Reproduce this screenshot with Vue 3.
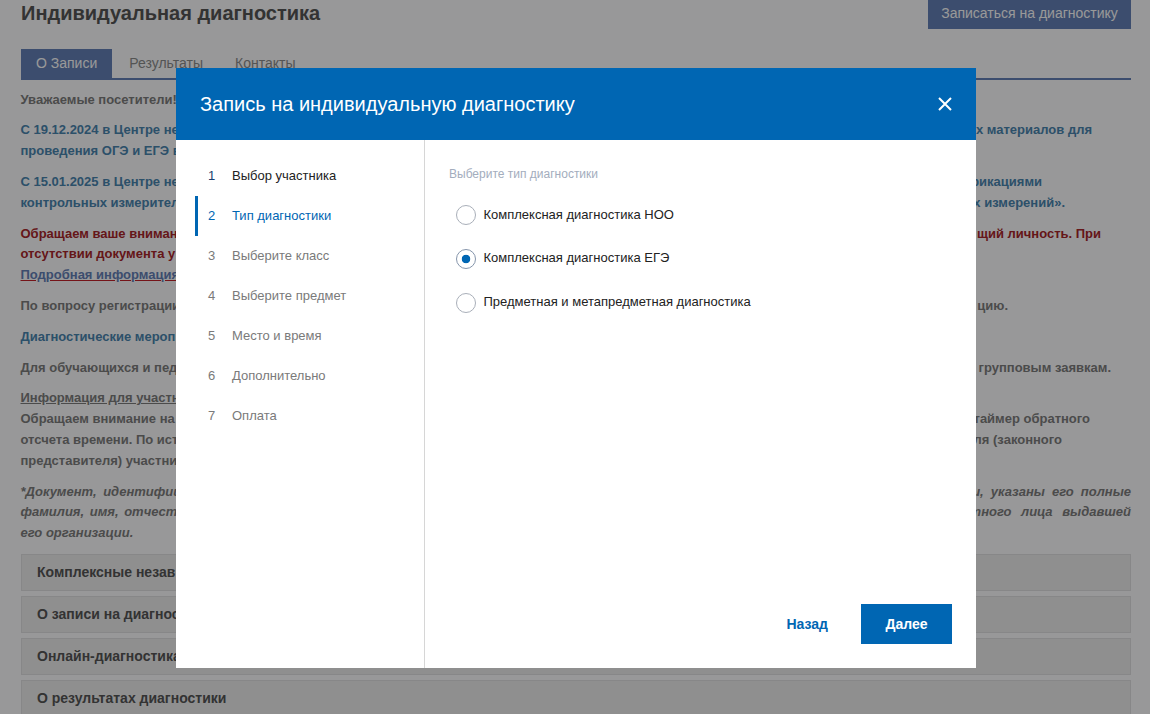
<template>
  <div class="page">
    <div class="head">
      <h1>Индивидуальная диагностика</h1>
      <a class="signup">Записаться на диагностику</a>
    </div>
    <div class="tabs">
      <a v-for="(t, i) in tabs" :key="t" class="tab" :class="{ active: i === 0 }">{{ t }}</a>
    </div>
    <div class="text">
      <p v-for="(para, i) in paragraphs" :key="i" :class="para.kind">
        <span v-for="(line, j) in para.lines" :key="j" class="line" :style="{ paddingRight: (line.inset || 0) + 'px' }">
          <span :class="{ ul: line.ul }" :style="{ wordSpacing: (line.ws || 0) + 'px' }">{{ line.left }}</span>
          <span v-if="line.right" :style="{ wordSpacing: (line.rws || 0) + 'px' }">{{ line.right }}</span>
        </span>
      </p>
    </div>
    <div class="accordion">
      <div v-for="a in accordion" :key="a" class="acc-item">{{ a }}</div>
    </div>
  </div>

  <div class="overlay">
    <div class="modal">
      <div class="modal-head">
        <h2>Запись на индивидуальную диагностику</h2>
        <button class="close" aria-label="Закрыть">
          <svg width="14" height="14" viewBox="0 0 14 14">
            <path d="M1 1L13 13M13 1L1 13" stroke="#fff" stroke-width="2" fill="none" />
          </svg>
        </button>
      </div>
      <div class="modal-body">
        <ul class="steps">
          <li v-for="(s, i) in steps" :key="s" class="step" :class="{ done: i === 0, current: i === 1 }">
            <span class="num">{{ i + 1 }}</span>
            <span>{{ s }}</span>
          </li>
        </ul>
        <div class="pane">
          <div class="pane-title">Выберите тип диагностики</div>
          <label v-for="(o, i) in options" :key="o" class="option">
            <input type="radio" name="kind" :value="i" v-model="picked" />
            <span>{{ o }}</span>
          </label>
          <div class="actions">
            <button class="back">Назад</button>
            <button class="next">Далее</button>
          </div>
        </div>
      </div>
    </div>
  </div>
</template>

<script setup>
import { ref } from 'vue'

const tabs = ['О Записи', 'Результаты', 'Контакты']
const picked = ref(1)

// the middle of each line sits behind the modal, only the visible ends are kept
const paragraphs = [
  { kind: 'plain', lines: [{ left: 'Уважаемые посетители!' }] },
  {
    kind: 'blue',
    lines: [
      { left: 'С 19.12.2024 в Центре нез', right: 'х материалов для', inset: 39 },
      { left: 'проведения ОГЭ и ЕГЭ в' },
    ],
  },
  {
    kind: 'blue',
    lines: [
      { left: 'С 15.01.2025 в Центре нез', right: 'фикациями', inset: 89 },
      { left: 'контрольных измерител', right: 'х измерений».', inset: 66 },
    ],
  },
  {
    kind: 'red',
    lines: [
      { left: 'Обращаем ваше вниман', right: 'щий личность. При', inset: 30 },
      { left: 'отсутствии документа у' },
      { left: 'Подробная информация', ul: true },
    ],
  },
  { kind: 'plain', lines: [{ left: 'По вопросу регистрации', right: 'цию.', inset: 123 }] },
  { kind: 'blue', lines: [{ left: 'Диагностические мероп' }] },
  { kind: 'plain', lines: [{ left: 'Для обучающихся и пед', right: 'групповым заявкам.', inset: 20 }] },
  {
    kind: 'plain',
    lines: [
      { left: 'Информация для участн', ul: true },
      { left: 'Обращаем внимание на', right: 'таймер обратного', inset: 41 },
      { left: 'отсчета времени. По ист', right: 'ля (законного', inset: 69 },
      { left: 'представителя) участни' },
    ],
  },
  {
    kind: 'note',
    lines: [
      { left: '*Документ, идентифиц', right: 'и, указаны его полные', ws: 3, rws: 3.5 },
      { left: 'фамилия, имя, отчест', right: 'стного лица выдавшей', ws: 2, rws: 6 },
      { left: 'его организации.' },
    ],
  },
]

const accordion = [
  'Комплексные незав',
  'О записи на диагнос',
  'Онлайн-диагностика',
  'О результатах диагностики',
]

const steps = [
  'Выбор участника',
  'Тип диагностики',
  'Выберите класс',
  'Выберите предмет',
  'Место и время',
  'Дополнительно',
  'Оплата',
]

const options = [
  'Комплексная диагностика НОО',
  'Комплексная диагностика ЕГЭ',
  'Предметная и метапредметная диагностика',
]
</script>

<style>
html,
body {
  margin: 0;
  height: 714px;
  overflow: hidden;
  background: #fdfeff;
}
</style>

<style scoped>
.page {
  height: 714px;
  overflow: hidden;
  box-sizing: border-box;
  padding: 0 19px 0 21px;
  font-family: "Liberation Sans", Arial, sans-serif;
  color: #7d7d7d;
}

.head {
  display: flex;
  justify-content: space-between;
  height: 29px;
}

h1 {
  margin: 0;
  font-size: 20px;
  line-height: 26px;
  font-weight: bold;
  color: #555;
}

.signup {
  width: 203px;
  height: 29px;
  line-height: 27px;
  text-align: center;
  font-size: 14px;
  color: #fff;
  background: #6480b7;
}

.tabs {
  display: flex;
  gap: 2px;
  margin-top: 20px;
  border-bottom: 2px solid #6480b7;
}

.tab {
  height: 29px;
  line-height: 29px;
  padding: 0 15px;
  font-size: 14px;
  color: #8c8c8c;
}

.tab.active {
  color: #fff;
  background: #6480b7;
}

.text {
  margin: 9.6px 0 0 -0.5px;
  font-size: 13px;
  line-height: 20.8px;
  font-weight: bold;
}

.text p {
  margin: 0 0 10px;
}

.line {
  display: flex;
  justify-content: space-between;
  white-space: nowrap;
}

.blue {
  color: #4a85b0;
}

.red {
  color: #a8252a;
}

.red .ul {
  color: #6480b7;
  text-decoration-color: #c4222a;
}

.ul {
  text-decoration: underline;
}

.note {
  font-style: italic;
}

.accordion {
  display: flex;
  flex-direction: column;
  gap: 5px;
  margin-top: 10.4px;
}

.acc-item {
  flex: none;
  height: 37px;
  box-sizing: border-box;
  padding-left: 15px;
  line-height: 35px;
  font-size: 14px;
  font-weight: bold;
  color: #555;
  background: #eeeeef;
  border: 1px solid #e2e2e3;
}

.overlay {
  position: fixed;
  inset: 0;
  background: rgba(0, 0, 0, 0.4);
  font-family: "Liberation Sans", Arial, sans-serif;
}

.modal {
  width: 800px;
  height: 600px;
  margin: 68px 0 0 176px;
  display: flex;
  flex-direction: column;
  background: #fff;
}

.modal-head {
  flex: none;
  height: 72px;
  display: flex;
  align-items: center;
  justify-content: space-between;
  padding: 0 24px;
  background: #0066b3;
  color: #fff;
}

h2 {
  margin: 0;
  font-size: 20px;
  font-weight: normal;
}

.close {
  display: flex;
  padding: 0;
  border: 0;
  background: none;
}

.modal-body {
  flex: 1;
  display: flex;
  min-height: 0;
}

.steps {
  flex: none;
  width: 229px;
  margin: 0;
  padding: 16px 0 0 19px;
  list-style: none;
  border-right: 1px solid #d6d6d6;
}

.step {
  height: 40px;
  display: flex;
  align-items: center;
  padding: 0 0 2px 10px;
  border-left: 3px solid transparent;
  box-sizing: border-box;
  font-size: 13px;
  color: #7a7a7a;
}

.num {
  width: 24px;
}

.step.done {
  color: #222;
}

.step.done .num {
  color: #1a3f70;
}

.step.current {
  color: #0066b3;
  border-left-color: #0066b3;
}

.pane {
  flex: 1;
  display: flex;
  flex-direction: column;
  padding: 27px 24px 24px;
  color: #222;
}

.pane-title {
  font-size: 12px;
  line-height: 15px;
  color: #a3adbd;
  margin-bottom: 23px;
}

.option {
  display: flex;
  align-items: center;
  height: 20px;
  margin: 0 0 23.75px 7px;
  gap: 8px;
  font-size: 13px;
}

.option span {
  position: relative;
  top: -1px;
  left: -0.5px;
}

.option input {
  appearance: none;
  flex: none;
  width: 20px;
  height: 20px;
  margin: 0;
  box-sizing: border-box;
  border: 1px solid #a9afb9;
  border-radius: 50%;
  background: #fff;
}

.option input:checked {
  border-color: #8595ab;
  background: radial-gradient(circle, #0066b3 0 4px, #fff 4.6px);
}

.actions {
  margin-top: auto;
  display: flex;
  justify-content: flex-end;
  gap: 33px;
}

.actions button {
  height: 40px;
  padding: 0;
  border: 0;
  font-family: inherit;
  font-size: 14px;
  font-weight: bold;
}

.back {
  color: #0066b3;
  background: none;
}

.next {
  width: 91px;
  color: #fff;
  background: #0066b3;
}
</style>
